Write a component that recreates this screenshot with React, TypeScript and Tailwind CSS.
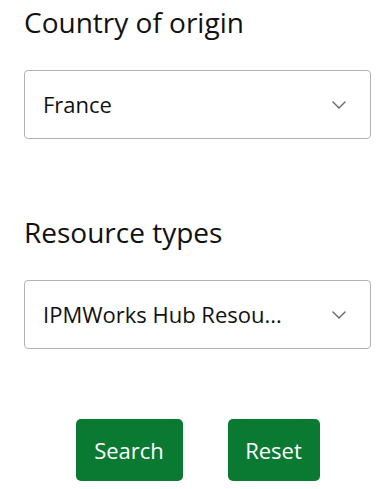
import { ChevronDown } from 'lucide-react'

const font = { fontFamily: '"Open Sans", "Noto Sans", sans-serif' }

function Field({ label, value }: { label: string; value: string }) {
  return (
    <div className="flex flex-col">
      <div className="text-[28px] leading-[38px] text-[#111]">{label}</div>
      <div className="mt-[29px] h-[69px] flex items-center justify-between border border-[#b3b3b3] rounded-[4px] pl-[18px] pr-[19px] bg-white">
        <span className="text-[22px] text-[#111] truncate">{value}</span>
        <ChevronDown className="w-6 h-6 text-[#666] shrink-0" strokeWidth={1.4} />
      </div>
    </div>
  )
}

export default function App() {
  return (
    <div style={font} className="w-[390px] h-[489px] bg-white pl-[24px] pr-[19px] pt-[3px]">
      <Field label="Country of origin" value="France" />
      <div className="mt-[74px]">
        <Field label="Resource types" value="IPMWorks Hub Resou..." />
      </div>
      <div className="flex justify-center gap-[45px] mt-[70px]">
        <button className="w-[107px] h-[62px] rounded-[5px] bg-[#0a7a32] text-white text-[22px]">Search</button>
        <button className="w-[92px] h-[62px] rounded-[5px] bg-[#0a7a32] text-white text-[22px]">Reset</button>
      </div>
    </div>
  )
}
